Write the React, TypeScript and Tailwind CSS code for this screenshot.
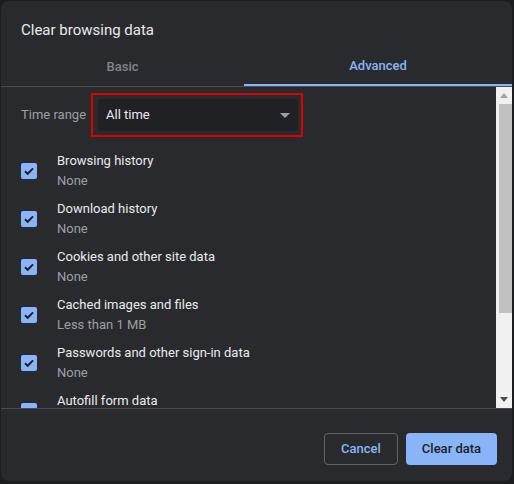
import React from 'react';

const items = [
  { title: 'Browsing history', sub: 'None' },
  { title: 'Download history', sub: 'None' },
  { title: 'Cookies and other site data', sub: 'None' },
  { title: 'Cached images and files', sub: 'Less than 1 MB' },
  { title: 'Passwords and other sign-in data', sub: 'None' },
  { title: 'Autofill form data', sub: 'None' },
];

const Check = () => (
  <div className="w-4 h-4 rounded-[2px] bg-[#8ab4f8] flex items-center justify-center shrink-0">
    <svg width="12" height="12" viewBox="0 0 12 12">
      <path d="M2 6.2 L4.7 8.8 L10 3.4" fill="none" stroke="#202124" strokeWidth="2" />
    </svg>
  </div>
);

const Scrollbar = () => (
  <div className="w-4 h-full bg-[#f1f1f1] flex flex-col items-center shrink-0">
    <div className="h-[17px] w-full flex items-center justify-center">
      <svg width="8" height="5" viewBox="0 0 8 5">
        <path d="M0 5 L4 0 L8 5 Z" fill="#a3a3a3" />
      </svg>
    </div>
    <div className="h-[209px] w-[13px] ml-[2px] bg-[#c1c1c1]" />
    <div className="flex-1" />
    <div className="h-[17px] w-full flex items-center justify-center">
      <svg width="8" height="5" viewBox="0 0 8 5">
        <path d="M0 0 L8 0 L4 5 Z" fill="#505050" />
      </svg>
    </div>
  </div>
);

export default function App() {
  return (
    <div
      className="w-[514px] h-[484px] bg-[#1c1d20] pt-px pl-px"
      style={{ fontFamily: 'Roboto, "Liberation Sans", sans-serif' }}
    >
      <div className="w-[511px] h-[480px] bg-[#292a2d] rounded-[8px] flex flex-col overflow-hidden">
        {/* header */}
        <div className="pt-[17px] pl-5 text-[15px] leading-6 text-[#e8eaed]">Clear browsing data</div>
        <div className="flex border-b border-[#4a4c50]">
          <div className="w-[243px] h-[44px] pt-[6px] flex items-center justify-center text-[13px] font-medium text-[#80868b]">
            Basic
          </div>
          <div className="flex-1 h-[44px] pt-[6px] flex items-center justify-center text-[13px] font-medium text-[#8ab4f8] border-b-2 border-[#8ab4f8]">
            Advanced
          </div>
        </div>

        {/* scroll area */}
        <div className="h-[322px] flex border-b border-[#4a4c50]">
          <div className="flex-1 overflow-hidden pl-5">
            <div className="flex items-center mt-[6px]">
              <div className="w-[70px] text-[13px] text-[#9aa0a6]">Time range</div>
              <div className="border-2 border-[#e00000] pt-1 pb-1 pl-[5px] pr-[3px]">
                <div className="w-[200px] h-8 bg-[#202124] rounded-[4px] flex items-center justify-between pl-2 pr-2">
                  <span className="text-[13px] text-[#e8eaed]">All time</span>
                  <svg width="10" height="5" viewBox="0 0 10 5">
                    <path d="M0 0 L10 0 L5 5 Z" fill="#9aa0a6" />
                  </svg>
                </div>
              </div>
            </div>
            <div className="mt-[10px] flex flex-col">
              {items.map((it) => (
                <div key={it.title} className="h-12 flex items-center shrink-0">
                  <Check />
                  <div className="ml-5">
                    <div className="text-[13px] leading-5 text-[#e8eaed]">{it.title}</div>
                    <div className="text-[13px] leading-5 text-[#9aa0a6]">{it.sub}</div>
                  </div>
                </div>
              ))}
            </div>
          </div>
          <Scrollbar />
        </div>

        {/* footer */}
        <div className="flex justify-end gap-2 pt-6 pr-[15px]">
          <button className="w-[74px] h-8 rounded-[4px] border border-[#5f6368] text-[13px] font-medium text-[#8ab4f8]">
            Cancel
          </button>
          <button className="w-[91px] h-8 rounded-[4px] bg-[#8ab4f8] text-[13px] font-medium text-[#202124]">
            Clear data
          </button>
        </div>
      </div>
    </div>
  );
}
